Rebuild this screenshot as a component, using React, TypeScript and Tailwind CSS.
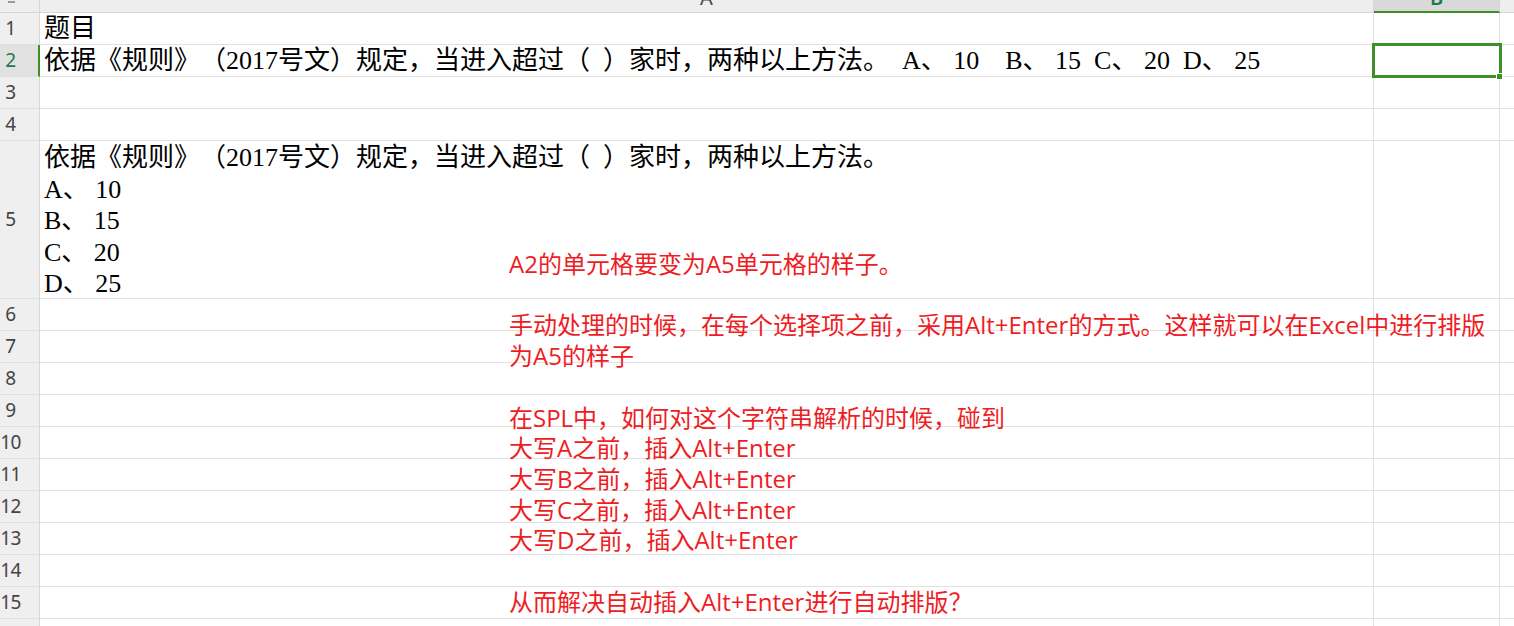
import React from "react";

const cellFont = { fontFamily: '"Liberation Serif", "Noto Sans CJK SC", serif' };
const headFont = { fontFamily: '"Noto Sans", "Open Sans", sans-serif' };
const noteFont = { fontFamily: '"Open Sans", "Noto Sans CJK SC", sans-serif' };

const sp = "\u2002";

const row2Text =
  `依据《规则》（2017号文）规定，当进入超过（${sp}）家时，两种以上方法。${sp}A、 10${sp}${sp}B、 15${sp}C、 20${sp}D、 25`;

const row5Text = [
  `依据《规则》（2017号文）规定，当进入超过（${sp}）家时，两种以上方法。`,
  "A、 10",
  "B、 15",
  "C、 20",
  "D、 25",
].join("\n");

const note = [
  "A2的单元格要变为A5单元格的样子。",
  "",
  "手动处理的时候，在每个选择项之前，采用Alt+Enter的方式。这样就可以在Excel中进行排版为A5的样子",
  "",
  "在SPL中，如何对这个字符串解析的时候，碰到",
  "大写A之前，插入Alt+Enter",
  "大写B之前，插入Alt+Enter",
  "大写C之前，插入Alt+Enter",
  "大写D之前，插入Alt+Enter",
  "",
  "从而解决自动插入Alt+Enter进行自动排版？",
].join("\n");

type Row = { n: number; tall?: boolean; text?: string; selected?: boolean };

const rows: Row[] = [
  { n: 1, text: "题目" },
  { n: 2, text: row2Text, selected: true },
  { n: 3 },
  { n: 4 },
  { n: 5, tall: true, text: row5Text },
  { n: 6 },
  { n: 7 },
  { n: 8 },
  { n: 9 },
  { n: 10 },
  { n: 11 },
  { n: 12 },
  { n: 13 },
  { n: 14 },
  { n: 15 },
  { n: 16 },
  { n: 17 },
];

const ColumnHeader = () => (
  <div className="flex h-[13px] overflow-hidden" style={headFont}>
    <div className="w-[40px] shrink-0 h-full bg-[#eeeeee] border-r border-b border-[#d6d6d6]">
      <div className="ml-[8px] w-[7px] h-[2px] mt-[1px] bg-[#9a9a9a]" />
    </div>
    <div className="w-[1334px] shrink-0 h-full bg-[#eeeeee] border-r border-b border-[#d6d6d6] flex justify-center overflow-hidden">
      <span className="block text-[20px] leading-[20px] -mt-[12px] text-[#444444]">A</span>
    </div>
    <div className="w-[126px] shrink-0 h-full bg-[#d9d9d9] border-r border-[#d6d6d6] border-b-2 border-b-[#3f8f29] flex justify-center overflow-hidden">
      <span className="block text-[20px] leading-[20px] -mt-[12px] text-[#1d7a4a] font-semibold">B</span>
    </div>
    <div className="flex-1 h-full bg-[#eeeeee] border-b border-[#d6d6d6]" />
  </div>
);

const GridRow = ({ row }: { row: Row }) => {
  const height = row.tall ? "h-[158px]" : "h-[32px]";
  return (
    <div className={`flex ${height} shrink-0`}>
      <div
        className={`w-[40px] shrink-0 h-full border-b border-[#dedede] flex items-center ${
          row.selected
            ? "bg-[#e1e1e1] border-r-2 border-r-[#3f8f29] text-[#1d7a4a]"
            : "bg-[#efefef] border-r border-r-[#d6d6d6] text-[#444444]"
        }`}
        style={headFont}
      >
        <span className="w-[21px] text-center text-[19px] leading-none tracking-[-0.5px]">{row.n}</span>
      </div>
      <div className="w-[1334px] shrink-0 h-full border-r border-b border-[#e1e1e1] overflow-hidden">
        {row.text && (
          <div
            className={`pl-[4px] whitespace-pre text-[26px] text-black [text-spacing-trim:space-all] ${
              row.tall ? "leading-[31.5px] pt-[1px]" : "leading-[31px]"
            }`}
            style={cellFont}
          >
            {row.text}
          </div>
        )}
      </div>
      <div className="w-[126px] shrink-0 h-full border-r border-b border-[#e1e1e1]" />
      <div className="flex-1 h-full border-b border-[#e1e1e1]" />
    </div>
  );
};

export default function App() {
  return (
    <div className="relative w-[1514px] h-[626px] overflow-hidden bg-white">
      <ColumnHeader />
      {rows.map((r) => (
        <GridRow key={r.n} row={r} />
      ))}

      {/* active cell B2 */}
      <div className="absolute left-[1372px] top-[43px] w-[130px] h-[35px] border-[3px] border-[#3f8f29]" />
      <div className="absolute left-[1496px] top-[73px] w-[7px] h-[7px] bg-[#3f8f29] border border-white" />

      {/* note text box */}
      <div
        className="absolute left-[509px] top-[249px] w-[990px] whitespace-pre-wrap text-[24px] leading-[30.7px] text-[#ee1d24] [text-spacing-trim:space-all]"
        style={noteFont}
      >
        {note}
      </div>
    </div>
  );
}
